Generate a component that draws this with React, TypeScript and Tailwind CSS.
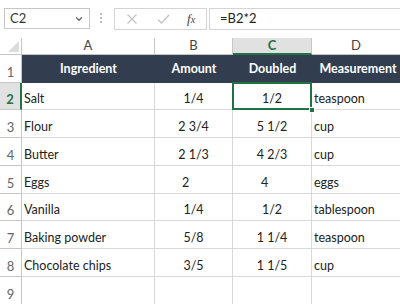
import { ChevronDown } from 'lucide-react'

type Row = {
  n: number
  h: string
  a: string
  b: string
  c: string
  d: string
  bLeft?: boolean
  cLeft?: boolean
}

const rows: Row[] = [
  { n: 2, h: 'h-[27px]', a: 'Salt', b: '1/4', c: '1/2', d: 'teaspoon' },
  { n: 3, h: 'h-[28px]', a: 'Flour', b: '2 3/4', c: '5 1/2', d: 'cup' },
  { n: 4, h: 'h-[28px]', a: 'Butter', b: '2 1/3', c: '4 2/3', d: 'cup' },
  { n: 5, h: 'h-[28px]', a: 'Eggs', b: '2', c: '4', d: 'eggs', bLeft: true, cLeft: true },
  { n: 6, h: 'h-[27px]', a: 'Vanilla', b: '1/4', c: '1/2', d: 'tablespoon' },
  { n: 7, h: 'h-[28px]', a: 'Baking powder', b: '5/8', c: '1 1/4', d: 'teaspoon' },
  { n: 8, h: 'h-[28px]', a: 'Chocolate chips', b: '3/5', c: '1 1/5', d: 'cup' },
]

const cell = 'flex items-end border-r border-b border-[#d9d9d9] pb-[4px] text-[12.5px] leading-none text-[#222]'
const rowHead = 'flex items-end justify-center border-r border-b border-[#c6c6c6] pb-[3px] text-[13px] leading-none text-[#666]'

function FormulaBar() {
  return (
    <div className="flex h-[38px] items-start pt-[8px]">
      <div className="ml-[4px] flex h-[21px] w-[86px] items-center justify-between border border-[#c6c6c6] pl-[5px] pr-[5px] text-[13px] text-[#333]">
        <span>C2</span>
        <ChevronDown size={10} strokeWidth={3} className="text-[#666]" />
      </div>
      <div className="ml-[10px] mt-[5px] flex flex-col gap-[2px]">
        <span className="h-[2px] w-[2px] bg-[#bbb]" />
        <span className="h-[2px] w-[2px] bg-[#bbb]" />
        <span className="h-[2px] w-[2px] bg-[#bbb]" />
      </div>
      <div className="ml-[12px] flex h-[22px] w-[93px] items-center border border-[#d4d4d4] text-[#c4c4c4]">
        <svg width="12" height="12" viewBox="0 0 12 12" className="ml-[11px]">
          <path d="M1.5 1.5 L10.5 10.5 M10.5 1.5 L1.5 10.5" stroke="#c4c4c4" strokeWidth="1.3" fill="none" />
        </svg>
        <svg width="13" height="12" viewBox="0 0 13 12" className="ml-[19px]">
          <path d="M1 6.5 L4.5 10 L12 2" stroke="#c4c4c4" strokeWidth="1.4" fill="none" />
        </svg>
        <span className="ml-[17px] font-['Liberation_Serif',serif] text-[13px] italic text-[#444]">
          f<span className="text-[10px]">x</span>
        </span>
      </div>
      <div className="ml-[2px] flex h-[22px] flex-1 items-center border border-r-0 border-[#d4d4d4] pl-[10px] text-[13px] text-[#222]">
        =B2*2
      </div>
    </div>
  )
}

export default function App() {
  return (
    <div className="h-[304px] w-[400px] overflow-hidden bg-white font-['Lato',sans-serif]">
      <FormulaBar />
      <div className="grid grid-cols-[22px_133px_78px_79px_1fr]">
        {/* column letters */}
        <div className="flex h-[17px] items-end justify-end border-r border-b border-[#c6c6c6] pb-[2px] pr-[2px]">
          <svg width="11" height="11" viewBox="0 0 11 11">
            <polygon points="11,0 11,11 0,11" fill="#dcdcdc" />
          </svg>
        </div>
        <div className="flex h-[17px] items-center justify-center border-r border-b border-[#c6c6c6] text-[13px] text-[#444]">A</div>
        <div className="flex h-[17px] items-center justify-center border-r border-b border-[#c6c6c6] text-[13px] text-[#444]">B</div>
        <div className="flex h-[17px] items-center justify-center border-r border-b-2 border-r-[#c6c6c6] border-b-[#217346] bg-[#e1e1e1] text-[13px] font-bold text-[#217346]">C</div>
        <div className="flex h-[17px] items-center justify-center border-b border-[#c6c6c6] text-[13px] text-[#444]">D</div>

        {/* header row */}
        <div className="flex h-[28px] items-end justify-center border-r border-b border-[#c6c6c6] pb-[3px] text-[13px] leading-none text-[#666]">1</div>
        <div className="col-span-4 grid h-[28px] grid-cols-[133px_78px_79px_1fr] bg-[#323e4f] text-[12.5px] font-bold text-white">
          <div className="flex items-center justify-center">Ingredient</div>
          <div className="flex items-center justify-center">Amount</div>
          <div className="flex items-center justify-center">Doubled</div>
          <div className="flex items-center justify-center pl-[4px]">Measurement</div>
        </div>

        {rows.map((r) => {
          const sel = r.n === 2
          return [
            <div
              key={`h${r.n}`}
              className={
                sel
                  ? `${r.h} flex items-end justify-center border-r-2 border-b border-r-[#217346] border-b-[#c6c6c6] bg-[#e1e1e1] pb-[3px] text-[13px] font-bold leading-none text-[#217346]`
                  : `${r.h} ${rowHead}`
              }
            >
              {r.n}
            </div>,
            <div key={`a${r.n}`} className={`${r.h} ${cell} pl-[2px]`}>
              {r.a}
            </div>,
            <div key={`b${r.n}`} className={`${r.h} ${cell} ${r.bLeft ? 'pl-[27px]' : 'justify-center'}`}>
              {r.b}
            </div>,
            sel ? (
              <div key={`c${r.n}`} className={`${r.h} relative ${cell} justify-center`}>
                <div className="absolute -left-px -top-px bottom-[-1px] right-[-1px] border-2 border-[#217346]" />
                <div className="absolute bottom-[-4px] right-[-4px] h-[6px] w-[6px] border border-white bg-[#217346]" />
                <span>{r.c}</span>
              </div>
            ) : (
              <div key={`c${r.n}`} className={`${r.h} ${cell} ${r.cLeft ? 'pl-[28px]' : 'justify-center'}`}>
                {r.c}
              </div>
            ),
            <div key={`d${r.n}`} className={`${r.h} ${cell} border-r-0 pl-[2px]`}>
              {r.d}
            </div>,
          ]
        })}

        <div className={`h-[28px] ${rowHead}`}>9</div>
        <div className={`h-[28px] ${cell}`} />
        <div className={`h-[28px] ${cell}`} />
        <div className={`h-[28px] ${cell}`} />
        <div className={`h-[28px] ${cell} border-r-0`} />
      </div>
    </div>
  )
}
